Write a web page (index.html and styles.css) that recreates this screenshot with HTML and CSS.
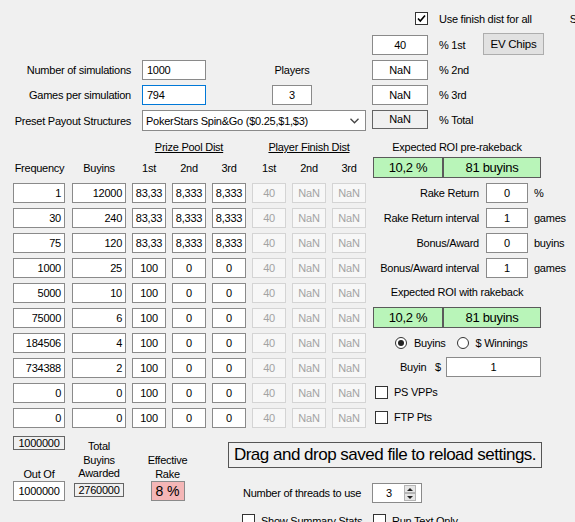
FILE: index.html
```html
<!DOCTYPE html>
<html>
<head>
<meta charset="utf-8">
<title>Simulator</title>
<link rel="stylesheet" href="styles.css">
</head>
<body>
<div class="form">
  <div class="main">
    <div class="left">
      <div class="setting">
        <div class="srow"><span class="slabel">Number of simulations</span><div class="tb sim">1000</div><div class="plabel">Players</div></div>
        <div class="srow"><span class="slabel">Games per simulation</span><div class="tb sim focus">794</div><div class="tb players">3</div></div>
        <div class="srow last"><span class="slabel">Preset Payout Structures</span><div class="combo"><span>PokerStars Spin&amp;Go ($0.25,$1,$3)</span><svg width="9" height="6" viewBox="0 0 9 6"><path d="M0.5 0.8 L4.5 4.8 L8.5 0.8" fill="none" stroke="#444" stroke-width="1.3"/></svg></div></div>
      </div>
      <div class="tgrid head1"><span class="prize">Prize Pool Dist</span><span class="player">Player Finish Dist</span></div>
      <div class="tgrid head2"><span>Frequency</span><span>Buyins</span><span>1st</span><span>2nd</span><span>3rd</span><span>1st</span><span>2nd</span><span>3rd</span></div>
      <div class="tgrid rows">
        <div class="tb r fq">1</div><div class="tb r">12000</div><div class="tb c">83,33</div><div class="tb c">8,333</div><div class="tb c">8,333</div><div class="tb c dis">40</div><div class="tb c dis">NaN</div><div class="tb c dis">NaN</div>
        <div class="tb r fq">30</div><div class="tb r">240</div><div class="tb c">83,33</div><div class="tb c">8,333</div><div class="tb c">8,333</div><div class="tb c dis">40</div><div class="tb c dis">NaN</div><div class="tb c dis">NaN</div>
        <div class="tb r fq">75</div><div class="tb r">120</div><div class="tb c">83,33</div><div class="tb c">8,333</div><div class="tb c">8,333</div><div class="tb c dis">40</div><div class="tb c dis">NaN</div><div class="tb c dis">NaN</div>
        <div class="tb r fq">1000</div><div class="tb r">25</div><div class="tb c">100</div><div class="tb c">0</div><div class="tb c">0</div><div class="tb c dis">40</div><div class="tb c dis">NaN</div><div class="tb c dis">NaN</div>
        <div class="tb r fq">5000</div><div class="tb r">10</div><div class="tb c">100</div><div class="tb c">0</div><div class="tb c">0</div><div class="tb c dis">40</div><div class="tb c dis">NaN</div><div class="tb c dis">NaN</div>
        <div class="tb r fq">75000</div><div class="tb r">6</div><div class="tb c">100</div><div class="tb c">0</div><div class="tb c">0</div><div class="tb c dis">40</div><div class="tb c dis">NaN</div><div class="tb c dis">NaN</div>
        <div class="tb r fq">184506</div><div class="tb r">4</div><div class="tb c">100</div><div class="tb c">0</div><div class="tb c">0</div><div class="tb c dis">40</div><div class="tb c dis">NaN</div><div class="tb c dis">NaN</div>
        <div class="tb r fq">734388</div><div class="tb r">2</div><div class="tb c">100</div><div class="tb c">0</div><div class="tb c">0</div><div class="tb c dis">40</div><div class="tb c dis">NaN</div><div class="tb c dis">NaN</div>
        <div class="tb r fq">0</div><div class="tb r">0</div><div class="tb c">100</div><div class="tb c">0</div><div class="tb c">0</div><div class="tb c dis">40</div><div class="tb c dis">NaN</div><div class="tb c dis">NaN</div>
        <div class="tb r fq">0</div><div class="tb r">0</div><div class="tb c">100</div><div class="tb c">0</div><div class="tb c">0</div><div class="tb c dis">40</div><div class="tb c dis">NaN</div><div class="tb c dis">NaN</div>
      </div>
    </div>
    <div class="right">
      <div class="chkrow">
        <div class="chk"><svg width="11" height="11" viewBox="0 0 11 11"><path d="M2 5.5 L4.3 8 L9 2.5" fill="none" stroke="#000" stroke-width="1.6"/></svg></div>
        <span class="chklabel">Use finish dist for all</span>
        <span class="cut">S</span>
      </div>
      <div class="prow first"><div class="tb c pct">40</div><span class="plab">% 1st</span><div class="btn">EV Chips</div></div>
      <div class="prow"><div class="tb c pct">NaN</div><span class="plab">% 2nd</span></div>
      <div class="prow"><div class="tb c pct">NaN</div><span class="plab">% 3rd</span></div>
      <div class="prow"><div class="lbox c pct tot">NaN</div><span class="plab">% Total</span></div>
      <div class="roilabel">Expected ROI pre-rakeback</div>
      <div class="green"><div class="g1">10,2 %</div><div class="g2">81 buyins</div></div>
      <div class="rrow"><span class="rlab">Rake Return</span><div class="tb c rin">0</div><span class="unit">%</span></div>
      <div class="rrow"><span class="rlab">Rake Return interval</span><div class="tb c rin">1</div><span class="unit">games</span></div>
      <div class="rrow"><span class="rlab">Bonus/Award</span><div class="tb c rin">0</div><span class="unit">buyins</span></div>
      <div class="rrow"><span class="rlab">Bonus/Award interval</span><div class="tb c rin">1</div><span class="unit">games</span></div>
      <div class="roilabel second">Expected ROI with rakeback</div>
      <div class="green second"><div class="g1">10,2 %</div><div class="g2">81 buyins</div></div>
      <div class="radrow">
        <div class="radio on"><div class="dot"></div></div><span class="radlab">Buyins</span>
        <div class="radio r2"></div><span class="radlab">$ Winnings</span>
      </div>
      <div class="buyrow"><span class="blab">Buyin</span><span class="dlr">$</span><div class="tb c bin">1</div></div>
      <div class="crow first"><div class="chk"></div><span class="clab">PS VPPs</span></div>
      <div class="crow"><div class="chk"></div><span class="clab">FTP Pts</span></div>
    </div>
  </div>
  <div class="bottom">
    <div class="bl">
      <div class="col1">
        <div class="lbox c sumbox">1000000</div>
        <div class="outof">Out Of</div>
        <div class="tb c outin">1000000</div>
      </div>
      <div class="col2">
        <div class="stack">Total<br>Buyins<br>Awarded</div>
        <div class="lbox c totbox">2760000</div>
      </div>
      <div class="col3">
        <div class="stack">Effective<br>Rake</div>
        <div class="pink">8 %</div>
      </div>
    </div>
    <div class="br">
      <div class="drag">Drag and drop saved file to reload settings.</div>
      <div class="thrrow">
        <span class="thrlab">Number of threads to use</span>
        <div class="spin"><span class="spinval">3</span>
          <div class="spinbtns">
            <div class="sb"><svg width="6" height="3" viewBox="0 0 6 3"><path d="M0 3 L3 0 L6 3 Z" fill="#222"/></svg></div>
            <div class="sb"><svg width="6" height="3" viewBox="0 0 6 3"><path d="M0 0 L3 3 L6 0 Z" fill="#222"/></svg></div>
          </div>
        </div>
      </div>
      <div class="lastrow">
        <div class="lgrp"><div class="chk"></div><span class="clab">Show Summary Stats</span></div>
        <div class="lgrp"><div class="chk"></div><span class="clab">Run Text Only</span></div>
      </div>
    </div>
  </div>
</div>
</body>
</html>
```

FILE: styles.css
```css
* { box-sizing: border-box; }
html, body { margin: 0; padding: 0; }
body {
  background: #f0f0f0;
  font-family: "Liberation Sans", Arial, sans-serif;
  font-size: 11px;
  letter-spacing: -0.25px;
  color: #000;
  width: 575px;
  height: 522px;
  overflow: hidden;
}
.form { width: 575px; height: 522px; }
.main { display: flex; height: 433px; }
.left { width: 370px; flex: none; }
.right { width: 205px; flex: none; }

.tb {
  height: 20px;
  border: 1px solid #8a8a8a;
  background: #fff;
  line-height: 18px;
  padding: 0 3px;
  white-space: nowrap;
  overflow: hidden;
}
.tb.r { text-align: right; padding-right: 3px; }
.c { text-align: center; }
.tb.c { padding: 0; }
.tb.dis { background: #f7f7f7; border-color: #d4d4d4; color: #a3a3a3; }
.lbox {
  border: 1px solid #646464;
  background: #f0f0f0;
  white-space: nowrap;
}

/* settings */
.setting { padding-top: 60px; }
.srow { display: flex; align-items: center; height: 20px; margin-bottom: 5px; }
.srow.last { height: 21px; margin-bottom: 0; }
.slabel { width: 131px; text-align: right; white-space: nowrap; flex: none; }
.sim { margin-left: 11px; width: 64px; padding-left: 4px; }
.focus { border-color: #0078d7; }
.plabel { margin-left: 66px; width: 40px; text-align: center; white-space: nowrap; }
.players { margin-left: 66px; width: 40px; text-align: center; padding: 0; }
.combo {
  margin-left: 11px;
  width: 224px;
  height: 21px;
  border: 1px solid #8a8a8a;
  background: #fff;
  display: flex;
  align-items: center;
  padding-left: 3px;
  white-space: nowrap;
}
.combo svg { margin-left: auto; margin-right: 6px; }

/* table */
.tgrid {
  display: grid;
  grid-template-columns: 53px 54px repeat(6, 34px);
  column-gap: 6px;
  margin-left: 13px;
}
.head1 { margin-top: 9px; height: 14px; line-height: 14px; }
.head1 span { text-align: center; text-decoration: underline; white-space: nowrap; }
.head1 .prize { grid-column: 3 / 6; }
.head1 .player { grid-column: 6 / 9; }
.head2 { margin-top: 7px; height: 14px; line-height: 14px; text-align: center; }
.head2 span { white-space: nowrap; }
.rows { margin-top: 8px; row-gap: 5px; grid-auto-rows: 20px; }
.rows .fq { width: 52px; }

/* right column */
.chkrow { display: flex; align-items: center; margin-top: 12px; height: 13px; }
.chk {
  width: 13px;
  height: 13px;
  border: 1px solid #333;
  background: #fff;
  flex: none;
  display: flex;
  align-items: center;
  justify-content: center;
}
.chkrow .chk { margin-left: 45px; }
.chklabel { margin-left: 11px; white-space: nowrap; }
.cut { margin-left: 38px; white-space: nowrap; }

.prow { display: flex; align-items: center; height: 20px; margin-top: 5px; }
.prow.first { margin-top: 10px; }
.pct { margin-left: 2px; width: 56px; flex: none; }
.tot { height: 19px; line-height: 17px; align-self: flex-start; }
.plab { margin-left: 11px; width: 44px; white-space: nowrap; flex: none; }
.btn {
  width: 61px;
  height: 22px;
  align-self: flex-start;
  margin-top: -2px;
  background: #e1e1e1;
  border: 1px solid #adadad;
  text-align: center;
  line-height: 20px;
  font-size: 11.5px;
  flex: none;
}

.roilabel {
  margin-top: 10px;
  margin-left: 3px;
  width: 168px;
  height: 14px;
  line-height: 14px;
  text-align: center;
  white-space: nowrap;
}
.roilabel.second { margin-top: 7px; }
.green { display: flex; margin-top: 3px; margin-left: 3px; height: 21px; }
.green.second { margin-top: 8px; }
.green div {
  background: #b9f5b9;
  border: 1px solid #5a5a5a;
  text-align: center;
  line-height: 19px;
  font-size: 13px;
  letter-spacing: -0.3px;
}
.g1 { width: 70px; }
.g2 { width: 98px; }

.rrow { display: flex; align-items: center; height: 20px; margin-top: 5px; }
.rlab { width: 109px; text-align: right; white-space: nowrap; flex: none; }
.rin { margin-left: 7px; width: 42px; flex: none; }
.unit { margin-left: 6px; white-space: nowrap; }

.radrow { display: flex; align-items: center; height: 14px; margin-top: 8px; }
.radio {
  width: 12px;
  height: 12px;
  border: 1px solid #333;
  border-radius: 50%;
  background: #fff;
  flex: none;
  margin-left: 25px;
  display: flex;
  align-items: center;
  justify-content: center;
}
.radio.r2 { margin-left: 11px; }
.dot { width: 6px; height: 6px; border-radius: 50%; background: #222; }
.radlab { margin-left: 7px; white-space: nowrap; }

.buyrow { display: flex; align-items: center; height: 20px; margin-top: 7px; }
.blab { margin-left: 30px; width: 35px; white-space: nowrap; }
.dlr { width: 11px; }
.bin { width: 95px; }

.crow { display: flex; align-items: center; height: 14px; margin-top: 11px; }
.crow.first { margin-top: 8px; }
.crow .chk { margin-left: 5px; }
.clab { margin-left: 6px; white-space: nowrap; }

/* bottom */
.bottom { display: flex; height: 89px; }
.bl { width: 228px; display: flex; padding-left: 13px; flex: none; }
.col1 { width: 52px; display: flex; flex-direction: column; }
.sumbox { margin-top: 3px; height: 14px; line-height: 12px; width: 52px; }
.outof { margin-top: 17px; height: 14px; line-height: 14px; text-align: center; white-space: nowrap; }
.outin { width: 52px; }
.col2 { margin-left: 7px; width: 54px; padding-top: 7px; display: flex; flex-direction: column; align-items: center; }
.stack { line-height: 13.5px; text-align: center; white-space: nowrap; }
.totbox { margin-top: 2.5px; width: 50px; height: 14px; line-height: 12px; }
.col3 { margin-left: 14px; width: 55px; padding-top: 21px; display: flex; flex-direction: column; align-items: center; }
.pink {
  width: 34px;
  height: 20px;
  background: #f4b6b6;
  border: 1px solid #8a8a8a;
  text-align: center;
  line-height: 18px;
  font-size: 14px;
  letter-spacing: 0;
  white-space: nowrap;
}

.br { flex: 1; display: flex; flex-direction: column; }
.drag {
  margin-top: 9px;
  width: 314px;
  height: 26px;
  border: 1px solid #555;
  text-align: center;
  line-height: 24px;
  font-size: 17px;
  letter-spacing: -0.5px;
  white-space: nowrap;
}
.thrrow { display: flex; align-items: center; height: 20px; margin-top: 15px; }
.thrlab { padding-left: 15px; width: 144px; white-space: nowrap; flex: none; }
.spin {
  width: 50px;
  height: 20px;
  border: 1px solid #8a8a8a;
  background: #fff;
  display: flex;
  align-items: center;
}
.spinval { padding-left: 13px; }
.spinbtns { margin-left: auto; margin-right: 5px; width: 12px; height: 16px; display: flex; flex-direction: column; }
.sb {
  flex: 1;
  background: #e6e6e6;
  border: 1px solid #b5b5b5;
  display: flex;
  align-items: center;
  justify-content: center;
}
.lastrow { display: flex; align-items: center; height: 13px; margin-top: 11px; }
.lgrp { display: flex; align-items: center; width: 131px; flex: none; }
.lgrp:first-child { margin-left: 14px; }
```
